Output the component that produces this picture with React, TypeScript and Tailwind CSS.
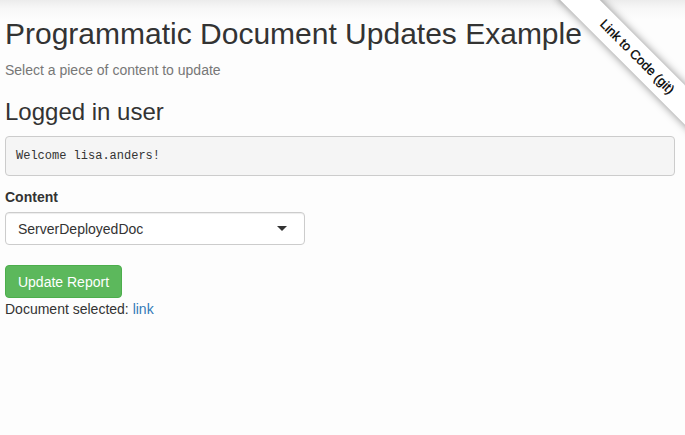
import React from "react";

export default function App() {
  return (
    <div
      className="relative min-h-[435px] w-full overflow-hidden bg-[linear-gradient(to_bottom,#ececec_0px,#f7f7f7_8px,#fdfdfd_20px,#fdfdfd_100%)] text-[#333] text-[14px] leading-[20px]"
      style={{ fontFamily: '"Liberation Sans", Arial, Helvetica, sans-serif' }}
    >
      <div className="pl-[5px] pr-[10px]">
        <h1 className="mt-[17px] text-[30px] leading-[33px] font-normal text-[#333]">
          Programmatic Document Updates Example
        </h1>
        <p className="mt-[10px] text-[#777]">Select a piece of content to update</p>
        <h3 className="mt-[19px] text-[24px] leading-[26.4px] font-normal">Logged in user</h3>
        <div
          className="mt-[11px] h-[40px] flex items-center rounded-[4px] border border-[#ccc] bg-[#f5f5f5] px-[10px] text-[12px] text-[#333]"
          style={{ fontFamily: '"Liberation Mono", "DejaVu Sans Mono", monospace' }}
        >
          Welcome lisa.anders!
        </div>
        <div className="mt-[11px] font-bold">Content</div>
        <div className="mt-[5px] flex h-[33px] w-[300px] items-center justify-between rounded-[4px] border border-[#ccc] bg-white pl-[12px] pr-[17px] shadow-[inset_0_1px_1px_rgba(0,0,0,0.075)]">
          <span>ServerDeployedDoc</span>
          <svg width="10" height="5" viewBox="0 0 10 5">
            <path d="M0 0 L10 0 L5 5 Z" fill="#333" />
          </svg>
        </div>
        <button className="mt-[20px] flex h-[33px] w-[117px] items-center justify-center rounded-[4px] border border-[#4cae4c] bg-[#5cb85c] text-white">
          Update Report
        </button>
        <div className="mt-[1px]">
          Document selected: <a className="text-[#337ab7]">link</a>
        </div>
      </div>

      <div className="absolute right-0 top-0 h-[150px] w-[150px] overflow-hidden pointer-events-none">
        <div className="absolute left-[2px] top-[43px] flex h-[28px] w-[200px] rotate-45 items-center justify-center bg-white text-[13px] text-black [-webkit-text-stroke:0.3px_black] shadow-[0_0_8px_rgba(0,0,0,0.45)]">
          Link to Code (git)
        </div>
      </div>
    </div>
  );
}
